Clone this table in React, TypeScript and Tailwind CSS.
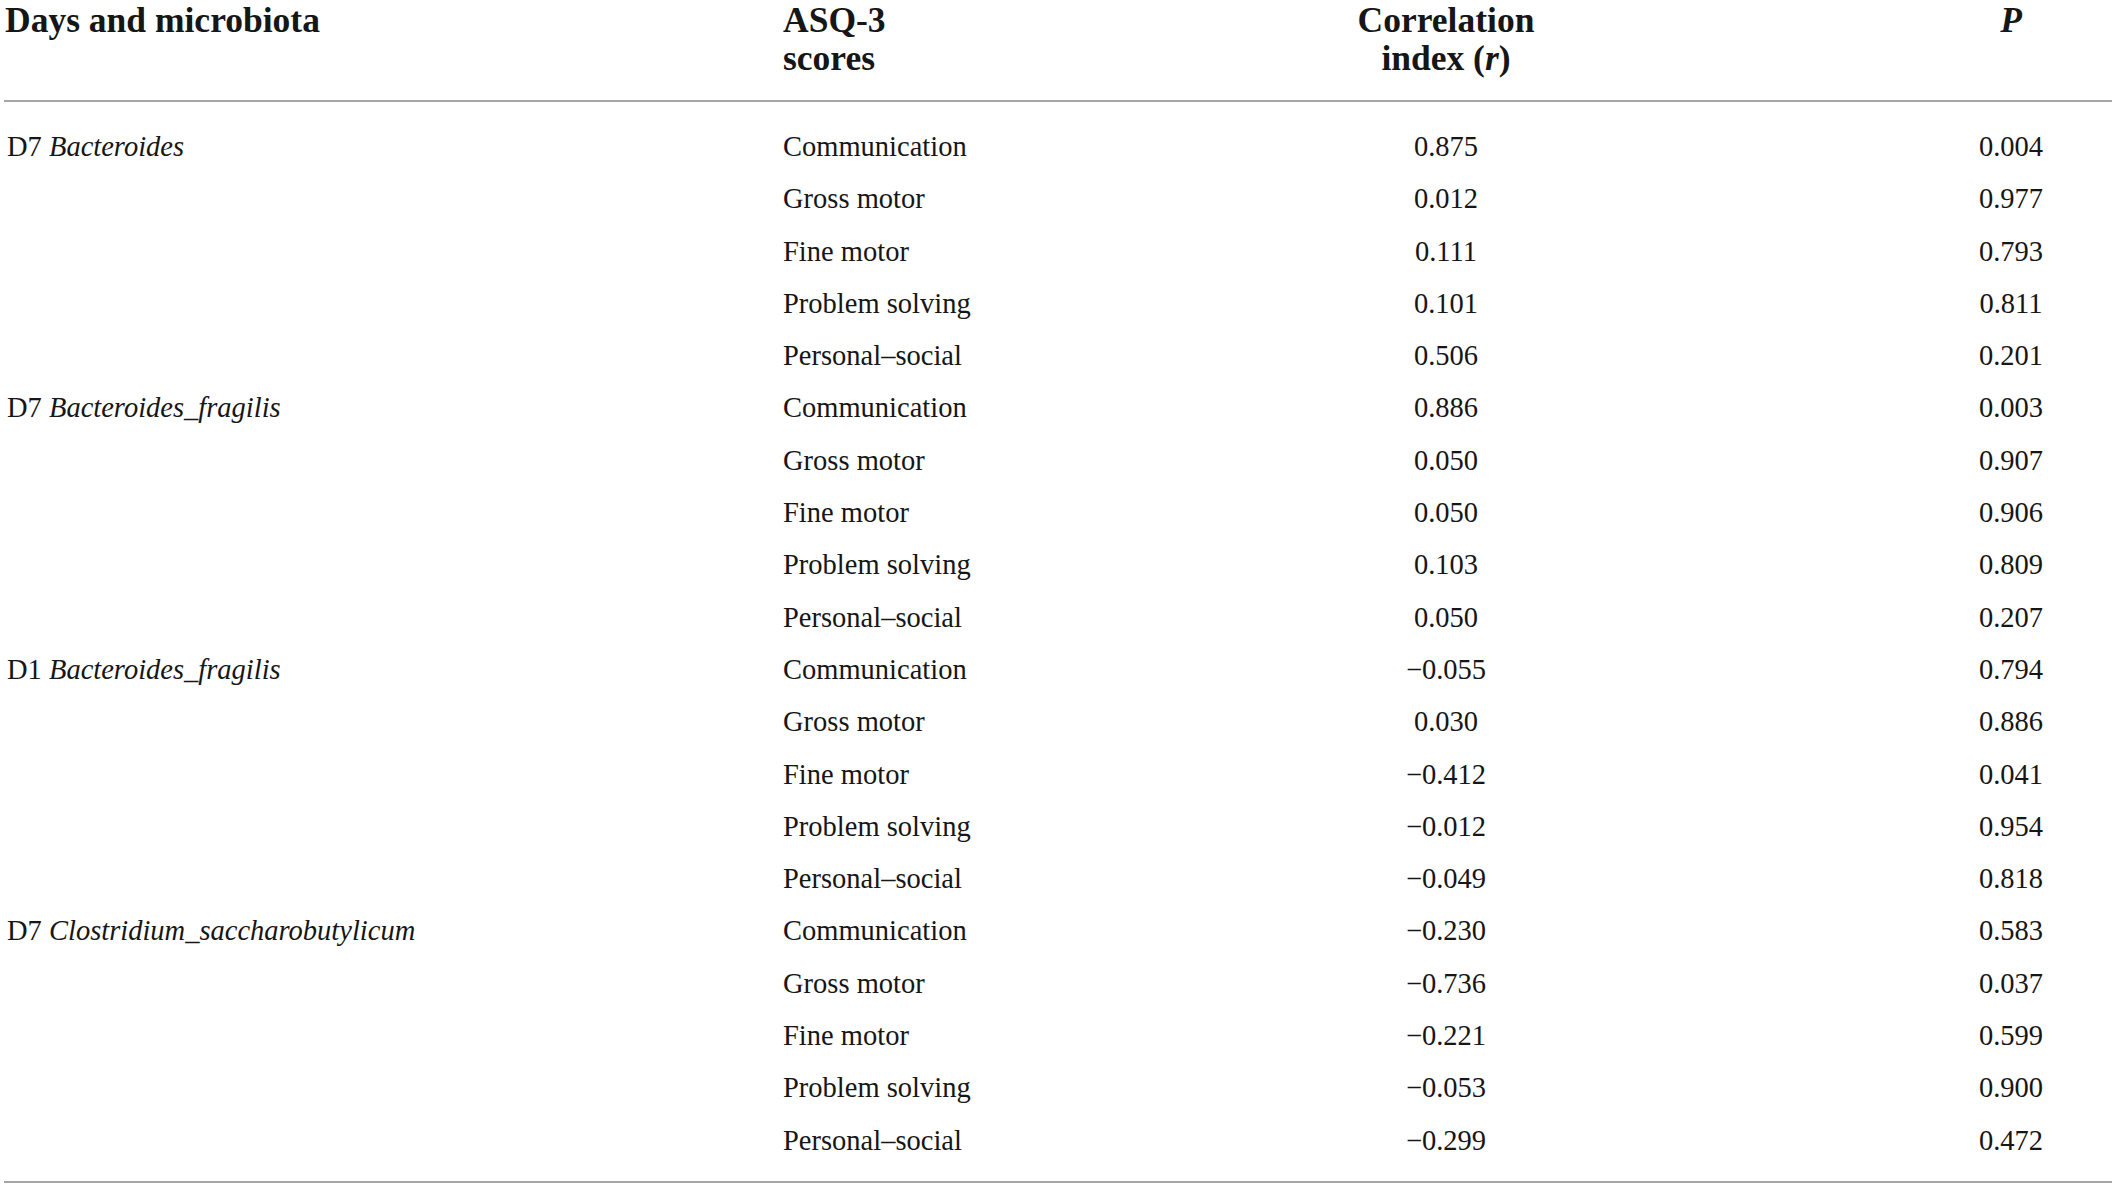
import React from "react";

type Row = { score: string; r: string; p: string };

type Group = { day: string; taxon: string; rows: Row[] };

const groups: Group[] = [
  {
    day: "D7",
    taxon: "Bacteroides",
    rows: [
      { score: "Communication", r: "0.875", p: "0.004" },
      { score: "Gross motor", r: "0.012", p: "0.977" },
      { score: "Fine motor", r: "0.111", p: "0.793" },
      { score: "Problem solving", r: "0.101", p: "0.811" },
      { score: "Personal–social", r: "0.506", p: "0.201" },
    ],
  },
  {
    day: "D7",
    taxon: "Bacteroides_fragilis",
    rows: [
      { score: "Communication", r: "0.886", p: "0.003" },
      { score: "Gross motor", r: "0.050", p: "0.907" },
      { score: "Fine motor", r: "0.050", p: "0.906" },
      { score: "Problem solving", r: "0.103", p: "0.809" },
      { score: "Personal–social", r: "0.050", p: "0.207" },
    ],
  },
  {
    day: "D1",
    taxon: "Bacteroides_fragilis",
    rows: [
      { score: "Communication", r: "−0.055", p: "0.794" },
      { score: "Gross motor", r: "0.030", p: "0.886" },
      { score: "Fine motor", r: "−0.412", p: "0.041" },
      { score: "Problem solving", r: "−0.012", p: "0.954" },
      { score: "Personal–social", r: "−0.049", p: "0.818" },
    ],
  },
  {
    day: "D7",
    taxon: "Clostridium_saccharobutylicum",
    rows: [
      { score: "Communication", r: "−0.230", p: "0.583" },
      { score: "Gross motor", r: "−0.736", p: "0.037" },
      { score: "Fine motor", r: "−0.221", p: "0.599" },
      { score: "Problem solving", r: "−0.053", p: "0.900" },
      { score: "Personal–social", r: "−0.299", p: "0.472" },
    ],
  },
];

const grid = "grid grid-cols-[779px_517px_292px_1fr]";

export default function App() {
  return (
    <div className="min-h-screen bg-white text-[#161616] font-['Liberation_Serif','Times_New_Roman',serif]">
      <div className="ml-[4px] w-[2108px]">
        {/* header */}
        <div className={`${grid} pt-[1px] pb-[23px] text-[35.5px] font-bold leading-[38px]`}>
          <div className="pl-[1px]">Days and microbiota</div>
          <div>
            ASQ-3
            <br />
            scores
          </div>
          <div className="text-center">
            Correlation
            <br />
            index (<i>r</i>)
          </div>
          <div>
            <div className="ml-auto w-[202px] text-center">
              <i>P</i>
            </div>
          </div>
        </div>
        <div className="h-[2px] bg-[#a6a6a6]" />

        {/* body */}
        <div className="pt-[19px] pb-[14px] text-[28.5px]">
          {groups.map((g, gi) =>
            g.rows.map((row, ri) => (
              <div key={gi + "-" + ri} className={`${grid} h-[52.3px] leading-[52.3px]`}>
                <div className="pl-[3px]">
                  {ri === 0 ? (
                    <>
                      {g.day} <i>{g.taxon}</i>
                    </>
                  ) : null}
                </div>
                <div>{row.score}</div>
                <div className="text-center">{row.r}</div>
                <div>
                  <div className="ml-auto w-[202px] text-center">{row.p}</div>
                </div>
              </div>
            ))
          )}
        </div>
        <div className="h-[2px] bg-[#a6a6a6]" />
      </div>
    </div>
  );
}
